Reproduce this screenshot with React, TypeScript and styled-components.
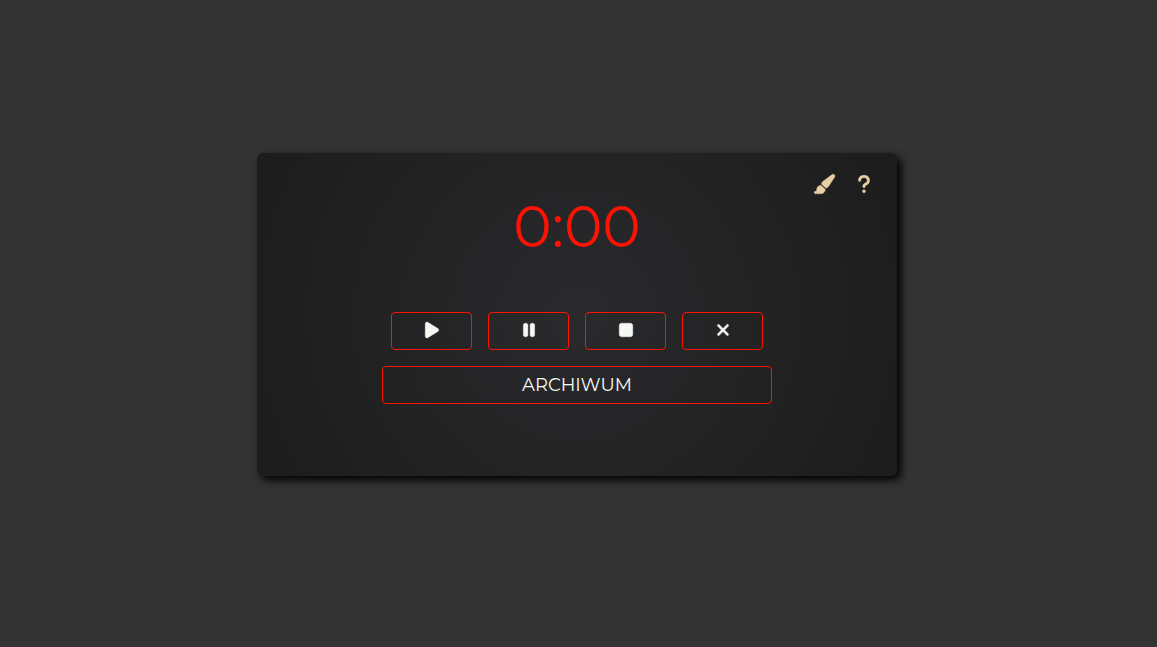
import React from "react";
import styled, { createGlobalStyle } from "styled-components";
import { FaPaintbrush, FaPause, FaPlay, FaQuestion, FaStop, FaXmark } from "react-icons/fa6";

const GlobalStyle = createGlobalStyle`
  *, *::before, *::after { box-sizing: border-box; }
  body {
    margin: 0;
    background: #333333;
    font-family: Montserrat, Inter, "Open Sans", sans-serif;
  }
`;

const Page = styled.main`
  display: flex;
  align-items: center;
  justify-content: center;
  min-height: 100vh;
  padding: 0 3px 18px 0;
`;

const Card = styled.section`
  display: flex;
  flex-direction: column;
  width: 100%;
  max-width: 640px;
  padding: 16px 16px 72px;
  border-radius: 6px;
  background: radial-gradient(circle, #2a2a2d 0%, #1c1c1c 100%);
  box-shadow: 4px 4px 8px #000000;
`;

const Tools = styled.nav`
  display: flex;
  justify-content: flex-end;
  gap: 10px;
  padding-right: 2px;
`;

const ToolButton = styled.button<{ $size: number }>`
  display: grid;
  place-items: center;
  width: 30px;
  height: 30px;
  padding: 0;
  border: 0;
  background: transparent;
  color: #e9cfa4;
  font-size: ${({ $size }) => $size}px;
  cursor: pointer;

  svg {
    overflow: visible;
    stroke: currentColor;
    stroke-width: 10px;
  }
`;

const Time = styled.time`
  align-self: center;
  color: #fc1303;
  font-size: 58px;
  font-weight: 400;
  line-height: 56px;
`;

const Controls = styled.div`
  display: flex;
  flex-direction: column;
  gap: 16px;
  width: 100%;
  max-width: 390px;
  margin: 57px auto 0;
`;

const ControlRow = styled.div`
  display: flex;
  gap: 16px;
  padding: 0 9px;
`;

const ControlButton = styled.button`
  display: flex;
  flex: 1;
  align-items: center;
  justify-content: center;
  min-height: 38px;
  padding: 0;
  border: 1px solid #fc1303;
  border-radius: 4px;
  background: transparent;
  color: #f5f9f3;
  font: inherit;
  font-size: 18px;
  line-height: 36px;
  cursor: pointer;
`;

const IconButton = styled(ControlButton)`
  padding: 0 0 2px;

  svg {
    stroke: currentColor;
    stroke-width: 12px;
  }
`;

const actions = [
  { label: "Start", Icon: FaPlay },
  { label: "Pauza", Icon: FaPause },
  { label: "Stop", Icon: FaStop },
  { label: "Reset", Icon: FaXmark },
];

export default function App() {
  return (
    <>
      <GlobalStyle />
      <Page>
        <Card>
          <Tools>
            <ToolButton type="button" aria-label="Kolory" $size={22}><FaPaintbrush /></ToolButton>
            <ToolButton type="button" aria-label="Pomoc" $size={20}><FaQuestion /></ToolButton>
          </Tools>
          <Time>0:00</Time>
          <Controls>
            <ControlRow>
              {actions.map(({ label, Icon }) => (
                <IconButton key={label} type="button" aria-label={label}><Icon /></IconButton>
              ))}
            </ControlRow>
            <ControlButton type="button">ARCHIWUM</ControlButton>
          </Controls>
        </Card>
      </Page>
    </>
  );
}
